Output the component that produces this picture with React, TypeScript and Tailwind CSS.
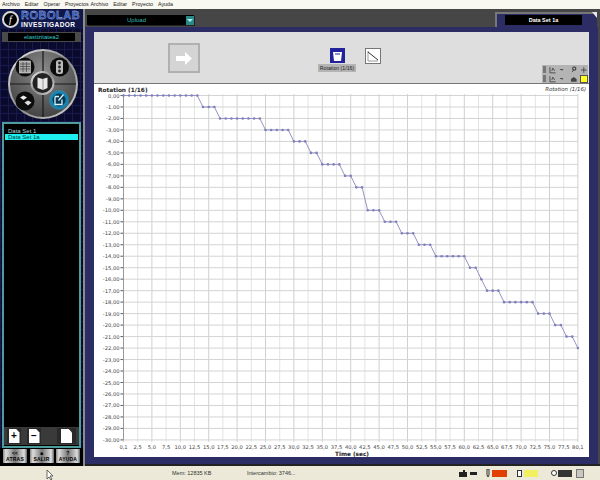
import React from "react";

const levels: [number, number][] = [[0,14],[1,3],[2,8],[3,5],[4,3],[5,2],[6,4],[7,2],[8,2],[10,3],[11,3],[12,3],[13,3],[14,6],[15,2],[16,1],[17,3],[18,6],[19,3],[20,2],[21,2],[22,1]];
const data: number[] = levels.flatMap(([v, n]) => Array(n).fill(v));
const X0 = 123.5, XS = 5.68, Y0 = 95.5, YS = 11.48;
const px = (i: number) => X0 + i * XS;
const py = (v: number) => Y0 + v * YS;
const xLabels = Array.from({ length: 33 }, (_, k) => (k === 0 ? "0,1" : k === 32 ? "80,1" : (k * 2.5).toFixed(1).replace(".", ",")));

function Chart() {
  const pts = data.map((v, i) => `${px(i).toFixed(1)},${py(v).toFixed(1)}`).join(" ");
  return (
    <svg viewBox="94 84 495 373" className="block w-[495px] h-[373px]" fontFamily="'DejaVu Sans',sans-serif">
      <text x="98" y="92" fontSize="5.8" fontWeight="700" fill="#222">Rotation (1/16)</text>
      <text x="586" y="91" fontSize="5.4" fontStyle="italic" textAnchor="end" fill="#333">Rotation (1/16)</text>
      <rect x={X0} y="94" width={578 - X0} height="346" fill="#fff" />
      {xLabels.map((l, k) => (
        <g key={l}>
          <line x1={X0 + k * 14.2} x2={X0 + k * 14.2} y1="94" y2="442" stroke={k % 2 ? "#e4e4e4" : "#d0d0d0"} strokeWidth="1" />
          <text x={X0 + k * 14.2} y="449" fontSize="5.2" textAnchor="middle" fill="#444">{l}</text>
        </g>
      ))}
      {Array.from({ length: 31 }, (_, v) => (
        <g key={v}>
          <line x1={X0 - 3} x2="578" y1={py(v)} y2={py(v)} stroke="#d4d4d4" strokeWidth="1" />
          <line x1={X0 - 3} x2={X0} y1={py(v)} y2={py(v)} stroke="#666" strokeWidth="1" />
          <text x={X0 - 4} y={py(v) + 2} fontSize="5.2" textAnchor="end" fill="#444">{v === 0 ? "0,00" : `-${v},00`}</text>
        </g>
      ))}
      <line x1={X0} x2={X0} y1="94" y2="440" stroke="#999" strokeWidth="1" />
      <polyline points={pts} fill="none" stroke="#9494c4" strokeWidth="1" />
      {data.map((v, i) => (
        <circle key={i} cx={px(i)} cy={py(v)} r="1.3" fill="#8080bc" />
      ))}
      <text x="352" y="456" fontSize="5.8" fontWeight="700" textAnchor="middle" fill="#222">Time (sec)</text>
    </svg>
  );
}

function Knob() {
  return (
    <svg width="72" height="72" viewBox="7 47 72 72" className="block">
      <defs>
        <linearGradient id="ring" x1="0" y1="0" x2="1" y2="1">
          <stop offset="0" stopColor="#f4f4f4" />
          <stop offset="0.5" stopColor="#8a8a8a" />
          <stop offset="1" stopColor="#d8d8d8" />
        </linearGradient>
        <radialGradient id="disc" cx="0.5" cy="0.3" r="0.8">
          <stop offset="0" stopColor="#8a8a8a" />
          <stop offset="1" stopColor="#3a3a3a" />
        </radialGradient>
      </defs>
      <circle cx="43" cy="83" r="35" fill="url(#ring)" />
      <circle cx="43" cy="83" r="33" fill="url(#disc)" />
      <path d="M43 50V72M43 94V116M10 83H32M54 83H76" stroke="#1a1a1a" strokeWidth="1.2" />
      <circle cx="25" cy="66" r="9.5" fill="#0c0c0c" />
      <circle cx="59.5" cy="66" r="9.5" fill="#0c0c0c" />
      <circle cx="25" cy="100" r="9.5" fill="#0c0c0c" />
      <circle cx="59" cy="99" r="10" fill="#10a0d4" opacity="0.55" />
      <circle cx="59" cy="99" r="8.5" fill="#0f84b8" />
      <circle cx="59" cy="99" r="6.5" fill="#0a3850" />
      <rect x="19.5" y="60" width="11" height="12" fill="#aaa" stroke="#ddd" strokeWidth="0.6" />
      <path d="M20 63H30M20 65.5H30M20 68H30M23 61V71M26.5 61V71" stroke="#444" strokeWidth="0.7" />
      <rect x="56" y="59" width="7" height="14" rx="2.5" fill="#bbb" />
      <circle cx="59.5" cy="62" r="1.4" fill="#222" />
      <circle cx="59.5" cy="66" r="1.4" fill="#222" />
      <circle cx="59.5" cy="70" r="1.4" fill="#222" />
      <path d="M20 96.5l3.5-2 3.5 2-3.5 2.5z" fill="#eee" />
      <path d="M24.5 101.5l3.5-2 3.5 2-3.5 3z" fill="#ddd" />
      <path d="M55 95.5h4M55 95.5v8h7v-5M63.5 93.5l-5 6" fill="none" stroke="#d6f4ff" strokeWidth="1.3" />
      <circle cx="42.5" cy="82" r="12" fill="url(#ring)" />
      <circle cx="42.5" cy="82" r="10" fill="#222" />
      <path d="M37.5 76.5l5 1.5 5-1.5v10.5l-4.5 2-5.5-2z" fill="#e8e8e8" />
      <path d="M43 78v11" stroke="#777" strokeWidth="0.7" />
    </svg>
  );
}

function DocButton({ sign, wide }: { sign?: string; wide?: boolean }) {
  return (
    <div className={`h-[16px] bg-[#2a2a2a] flex items-center justify-center ${wide ? "w-[19px]" : "w-[14px]"}`}>
      <div className="w-[11px] h-[14px] bg-white flex items-center justify-center text-[10px] leading-none font-bold text-black [clip-path:polygon(0_0,70%_0,100%_25%,100%_100%,0_100%)]">
        {sign}
      </div>
    </div>
  );
}

function NavButton({ top, label }: { top: string; label: string }) {
  return (
    <div className="w-[24px] h-[14px] flex flex-col items-center justify-center bg-[linear-gradient(90deg,#888,#ddd_12%,#777_50%,#ddd_88%,#666)] text-black text-[5px] leading-[6px] font-bold tracking-[0.2px]">
      <span>{top}</span>
      <span>{label}</span>
    </div>
  );
}

function Sidebar() {
  return (
    <div className="w-[85px] flex flex-col bg-[#0a0a2c] bg-[linear-gradient(#191950_1px,transparent_1px),linear-gradient(90deg,#191950_1px,transparent_1px)] bg-[size:8px_8px] border-r-2 border-[#8c8c8c]">
      <div className="h-[20px] flex items-center bg-[#10184a] pl-[2px] gap-[2px]">
        <div className="w-[17px] h-[17px] rounded-full bg-black border-2 border-[#d8d8d8] flex items-center justify-center text-white text-[10px] italic font-['Liberation_Serif',serif] shrink-0">f</div>
        <div className="flex flex-col items-start leading-none">
          <span className="text-[11px] leading-[11px] font-black tracking-[0.5px] text-[#2c4fae] [-webkit-text-stroke:0.3px_#b8c8f0] font-['Liberation_Sans',sans-serif]">ROBOLAB</span>
          <span className="text-[6.5px] leading-[7px] font-bold tracking-[0.4px] text-white">INVESTIGADOR</span>
        </div>
      </div>
      <div className="h-[3px]" />
      <div className="mx-[2px] h-[10px] bg-[#4a4a4a] flex items-center justify-center">
        <div className="w-[67px] h-[8px] bg-black text-[#35c8c8] text-[6px] leading-[8px] text-center">elastizitatea2</div>
      </div>
      <div className="h-[6px]" />
      <div className="pl-[7px] h-[72px]"><Knob /></div>
      <div className="h-[2px]" />
      <div className="mx-[2px] h-[326px] border-2 border-[#4f9c9c] bg-black flex flex-col">
        <div className="h-[4px]" />
        <div className="text-[#b0d8d8] text-[6px] leading-[6px] pl-[3px] mx-[1px]">Data Set 1</div>
        <div className="bg-[#1ef0f0] text-[#063c3c] text-[6px] leading-[6px] pl-[3px] mx-[1px]">Data Set 1a</div>
        <div className="flex-1" />
        <div className="flex items-center pl-[3px] pr-[3px] gap-[6px] bg-[#3a3a3a] h-[18px] mb-[1px]">
          <DocButton sign="+" />
          <DocButton sign="−" />
          <div className="flex-1" />
          <DocButton wide />
        </div>
      </div>
      <div className="flex-1 bg-black pt-[1px]">
        <div className="flex justify-between px-[3px]">
          <NavButton top="<<" label="ATRAS" />
          <NavButton top="■" label="SALIR" />
          <NavButton top="?" label="AYUDA" />
        </div>
      </div>
    </div>
  );
}

function PaletteIcon({ kind }: { kind: "plot" | "mag" | "plus" | "hand" }) {
  return (
    <svg width="8" height="8" viewBox="0 0 8 8" className="block">
      {kind === "plot" && <path d="M1 1v6h6M3 5l1-3 2 3" fill="none" stroke="#333" strokeWidth="0.8" />}
      {kind === "mag" && <path d="M2 6l2-2M3 1h3v3H3z" fill="none" stroke="#333" strokeWidth="1" />}
      {kind === "plus" && <path d="M4 1v6M1 4h6" stroke="#333" strokeWidth="0.8" />}
      {kind === "hand" && <path d="M1 7V4l3-2 3 2v3z" fill="#444" />}
    </svg>
  );
}

function Palette() {
  const row = (icon: "mag" | "hand", last: React.ReactNode) => (
    <div className="flex items-center h-[8px] gap-[1px] pl-[1px]">
      <div className="w-[3px] h-[7px] bg-[#777]" />
      <div className="w-[1px]" />
      <PaletteIcon kind="plot" />
      <div className="w-[9px] text-[4px] leading-[8px] text-[#333] text-center">▪▾</div>
      <div className="w-[2px]" />
      <PaletteIcon kind={icon} />
      <div className="w-[1px]" />
      {last}
    </div>
  );
  return (
    <div className="self-end w-[46px] h-[18px] bg-[#b4b4b4] flex flex-col justify-center gap-[1px] overflow-hidden">
      {row("mag", <PaletteIcon kind="plus" />)}
      {row("hand", <div className="w-[8px] h-[8px] bg-[#ffff20] border border-[#555]" />)}
    </div>
  );
}

function Toolbar() {
  return (
    <div className="h-[52px] bg-[#dedede] border-b border-[#777] flex">
      <div className="w-[74px]" />
      <div className="mt-[11px] w-[32px] h-[30px] bg-[#d4d4d4] border-2 border-[#b0b0b0] flex items-center justify-center">
        <svg width="18" height="15" viewBox="0 0 18 15"><path d="M1 5h9V1l7 6.5-7 6.5v-4H1z" fill="#fff" /></svg>
      </div>
      <div className="w-[118px]" />
      <div className="w-[38px] mt-[16px] flex flex-col items-center">
        <div className="w-[15px] h-[15px] bg-[#22229c] flex items-center justify-center">
          <svg width="11" height="12" viewBox="0 0 11 12"><path d="M1 2h9l-1 9H2z" fill="#fff" /><path d="M3 4h5" stroke="#22229c" /></svg>
        </div>
        <div className="h-[1px]" />
        <div className="w-[38px] h-[8px] bg-[#b4b4b4] text-[#222] text-[5.2px] leading-[8px] text-center whitespace-nowrap">Rotation (1/16)</div>
      </div>
      <div className="w-[9px]" />
      <div className="mt-[16px] w-[16px] h-[16px] bg-white border border-[#777] flex items-center justify-center">
        <svg width="12" height="12" viewBox="0 0 12 12"><path d="M1 1v10h10" fill="none" stroke="#999" /><path d="M1 2l10 8" stroke="#333" /></svg>
      </div>
      <div className="flex-1" />
      <Palette />
      <div className="w-[1px]" />
    </div>
  );
}

function StatusBar() {
  return (
    <div className="h-[14px] bg-[#ece9d8] flex items-center text-[#333] text-[5.5px]">
      <div className="w-[172px]" />
      <div className="w-[75px]">Mem: 12835 KB</div>
      <div className="w-[211px]">Intercambio: 3746...</div>
      <svg width="10" height="9" viewBox="0 0 10 9"><path d="M1 3h4V1h2v2h2v5H1z" fill="#222" /></svg>
      <div className="w-[2px]" />
      <div className="w-[7px] h-[3px] bg-[#222]" />
      <div className="w-[9px]" />
      <svg width="4" height="8" viewBox="0 0 4 8"><path d="M1 0h2v6L2 8 1 6z" fill="none" stroke="#333" /></svg>
      <div className="w-[2px]" />
      <div className="w-[15px] h-[7px] bg-[#e04000]" />
      <div className="w-[10px]" />
      <div className="w-[5px] h-[7px] bg-white border border-[#333]" />
      <div className="w-[2px]" />
      <div className="w-[14px] h-[7px] bg-[#f0f060]" />
      <div className="w-[13px]" />
      <div className="w-[6px] h-[6px] rounded-full border border-[#333] bg-white" />
      <div className="w-[1px]" />
      <div className="w-[14px] h-[7px] bg-[#333533]" />
      <div className="w-[4px]" />
      <div className="w-[8px] h-[9px] bg-[#c8c8c0] border border-[#777]" />
    </div>
  );
}

export default function App() {
  return (
    <div className="w-[600px] h-[480px] overflow-hidden flex flex-col bg-[#ece9d8] font-['Liberation_Sans',sans-serif] relative">
      <div className="h-[9px] bg-[#f8f7f0] flex items-center text-[#222] text-[5.3px] leading-[9px] gap-[5px] pl-[2px]">
        <span>Archivo</span><span>Editar</span><span>Operar</span><span>Proyectos</span><span className="-ml-[3px]">Archivo</span><span>Editar</span><span>Proyecto</span><span>Ayuda</span>
      </div>
      <div className="h-[457px] flex">
        <Sidebar />
        <div className="flex-1 flex flex-col bg-[#464646]">
          <div className="h-[18px] flex">
            <div className="pl-[2px] pt-[6px]">
              <div className="w-[107px] h-[10px] bg-black shadow-[1px_1px_0_#222] flex items-center">
                <div className="flex-1 text-center text-[#32b4b4] text-[6px] leading-[10px]">Upload</div>
                <div className="w-[8px] h-[9px] bg-[#2a8a8a] flex items-center justify-center">
                  <div className="w-0 h-0 border-x-[3px] border-x-transparent border-t-[3px] border-t-[#a8f4f4]" />
                </div>
              </div>
            </div>
            <div className="flex-1" />
            <div className="mt-[3px] w-[102px] h-[15px] bg-[#2d2d66] border-t-2 border-l-2 border-[#777] pl-[8px] pt-[1px] relative">
              <div className="w-[77px] h-[10px] bg-black text-white text-[5.5px] leading-[10px] font-bold text-center">Data Set 1a</div>
              <div className="absolute -top-[2px] right-0 w-0 h-0 border-l-[5px] border-l-transparent border-t-[6px] border-t-[#e8e8e8]" />
            </div>
            <div className="w-[3px]" />
          </div>
          <div className="h-[437px] mr-[2px] bg-[#2d2d66] pt-[5px] pl-[9px] pr-[9px] flex flex-col">
            <Toolbar />
            <div className="bg-white h-[373px]"><Chart /></div>
          </div>
          <div className="h-[2px] bg-[#222]" />
        </div>
      </div>
      <StatusBar />
      <svg width="8" height="12" viewBox="0 0 8 12" className="absolute left-[46px] top-[469px]">
        <path d="M1 1v9l2-2 2 3 1-1-2-3h3z" fill="#fff" stroke="#444" strokeWidth="0.8" />
      </svg>
    </div>
  );
}
